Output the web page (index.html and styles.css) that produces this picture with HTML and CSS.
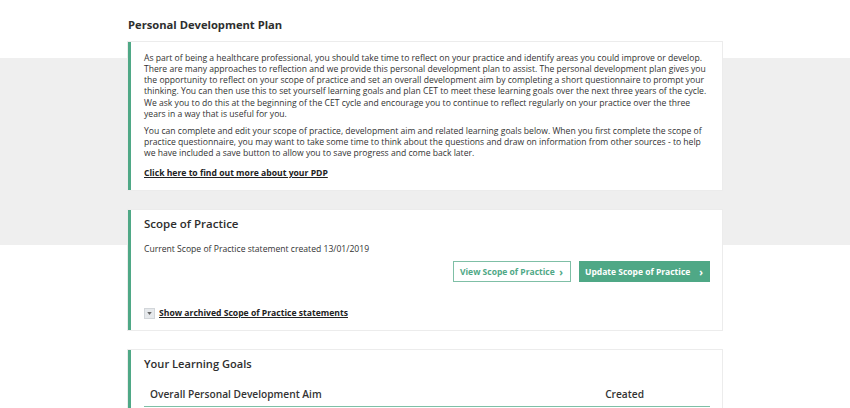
FILE: index.html
```html
<!DOCTYPE html>
<html>
<head>
<meta charset="utf-8">
<link rel="stylesheet" href="styles.css">
</head>
<body>
<div class="page">
  <div class="wrap">
    <h1 class="title">Personal Development Plan</h1>
    <section class="card intro">
      <p>As part of being a healthcare professional, you should take time to reflect on your practice and identify areas you could improve or develop. There are many approaches to reflection and we provide this personal development plan to assist. The personal development plan gives you the opportunity to reflect on your scope of practice and set an overall development aim by completing a short questionnaire to prompt your thinking. You can then use this to set yourself learning goals and plan CET to meet these learning goals over the next three years of the cycle. We ask you to do this at the beginning of the CET cycle and encourage you to continue to reflect regularly on your practice over the three years in a way that is useful for you.</p>
      <p>You can complete and edit your scope of practice, development aim and related learning goals below. When you first complete the scope of practice questionnaire, you may want to take some time to think about the questions and draw on information from other sources - to help we have included a save button to allow you to save progress and come back later.</p>
      <div class="more"><a class="link" href="#">Click here to find out more about your PDP</a></div>
    </section>
    <section class="card scope">
      <h2 class="card-title">Scope of Practice</h2>
      <p class="status">Current Scope of Practice statement created 13/01/2019</p>
      <div class="actions">
        <a class="btn btn-outline" href="#">View Scope of Practice <span class="chev">&#8250;</span></a>
        <a class="btn btn-solid" href="#">Update Scope of Practice <span class="chev">&#8250;</span></a>
      </div>
      <div class="archived">
        <span class="toggle"><svg width="5" height="3" viewBox="0 0 6 4"><path d="M0 0h6L3 4z" fill="#666"/></svg></span>
        <a class="link" href="#">Show archived Scope of Practice statements</a>
      </div>
    </section>
    <section class="card goals">
      <h2 class="card-title card-title-sm">Your Learning Goals</h2>
      <div class="table-head">
        <span>Overall Personal Development Aim</span>
        <span class="col-created">Created</span>
      </div>
    </section>
  </div>
</div>
</body>
</html>
```
FILE: styles.css
```css
* { box-sizing: border-box; }
html, body { margin: 0; padding: 0; }
body {
  font-family: "Open Sans", "Liberation Sans", sans-serif;
  color: #333;
  background: linear-gradient(to bottom, #fff 0, #fff 58px, #efefef 58px, #efefef 245px, #fff 245px);
  height: 408px;
  overflow: hidden;
}
.wrap {
  width: 594px;
  margin: 0 auto;
  padding-top: 17px;
}
.title {
  font-size: 11.2px;
  font-weight: 700;
  margin: 0 0 10px;
  line-height: 15px;
  color: #2e2e2e;
}
.card {
  background: #fff;
  border-left: 3px solid #4fa886;
  box-shadow: 0 0 0 1px #ececec;
  padding: 10.5px 12px 0 13px;
  margin-bottom: 20px;
}
.intro { height: 148px; }
.intro p {
  font-size: 8.6px;
  line-height: 11.3px;
  margin: 0 0 5.4px;
  color: #333;
}
.intro p + p { margin-bottom: 4px; }
.more { line-height: 12px; }
.link {
  font-size: 8.6px;
  font-weight: 700;
  color: #222;
  text-decoration: underline;
}
.scope { height: 120px; padding-top: 6px; }
.card-title {
  font-size: 11.5px;
  font-weight: 600;
  margin: 0;
  line-height: 16px;
  color: #2e2e2e;
}
.card-title-sm { font-size: 11.1px; }
.status {
  font-size: 8.6px;
  margin: 11px 0 0;
  line-height: 12px;
  color: #333;
}
.actions {
  display: flex;
  justify-content: flex-end;
  gap: 8px;
  margin-top: 6px;
}
.btn {
  display: inline-flex;
  align-items: center;
  justify-content: space-between;
  white-space: nowrap;
  height: 21px;
  font-size: 8.5px;
  font-weight: 700;
  text-decoration: none;
  padding: 0 7px 0 6px;
}
.btn .chev { font-size: 10px; line-height: 10px; }
.btn-outline {
  border: 1px solid #7fbfa6;
  color: #4fa886;
  width: 118px;
}
.btn-solid {
  background: #4fa886;
  color: #fff;
  width: 131px;
}
.archived {
  display: flex;
  align-items: center;
  gap: 4px;
  margin-top: 25px;
}
.toggle {
  width: 11px;
  height: 11px;
  background: #e6e9ec;
  border: 1px solid #d2d6da;
  display: inline-flex;
  align-items: center;
  justify-content: center;
}
.goals { padding-top: 6px; height: 80px; }
.table-head {
  display: flex;
  justify-content: space-between;
  margin-top: 15px;
  padding: 0 66px 5px 6px;
  border-bottom: 1px solid #7fbfa6;
  font-size: 10.2px;
  font-weight: 600;
  line-height: 14px;
}
```
